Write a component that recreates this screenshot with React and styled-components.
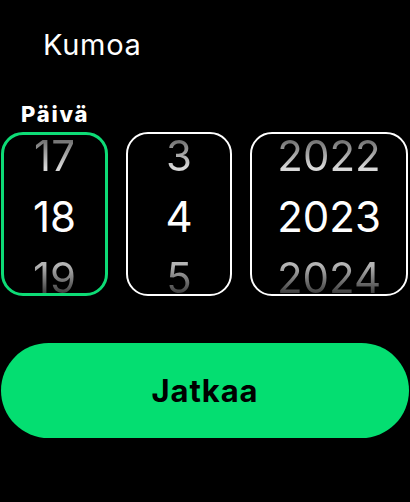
import React from "react";
import styled, { createGlobalStyle } from "styled-components";

const Global = createGlobalStyle`
  html, body { margin: 0; padding: 0; background: #000; }
  body { font-family: Inter, "Noto Sans", sans-serif; color: #fff; }
`;

const Screen = styled.div`
  width: 410px;
  height: 502px;
  background: #000;
  display: flex;
  flex-direction: column;
  overflow: hidden;
`;

const Cancel = styled.div`
  margin: 28px 0 0 43px;
  font-size: 29px;
  line-height: 34px;
  font-weight: 400;
  letter-spacing: 0.7px;
  color: #fff;
`;

const Label = styled.div`
  margin: 40px 0 0 21px;
  font-size: 22px;
  line-height: 24px;
  font-weight: 800;
  letter-spacing: 1.8px;
`;

const Pickers = styled.div`
  margin: 6px 2px 0 1px;
  display: grid;
  grid-template-columns: 107px 106px 1fr;
  column-gap: 18px;
`;

const Wheel = styled.div`
  box-sizing: border-box;
  height: 164px;
  border: ${(p) => (p.$active ? "3px solid #0ddc76" : "2px solid #fff")};
  border-radius: 22px;
  overflow: hidden;
  display: flex;
  flex-direction: column;
  align-items: center;
  justify-content: center;
  padding-top: 4px;
`;

const Item = styled.div`
  flex: 0 0 61px;
  line-height: 61px;
  font-size: 42px;
  font-weight: 400;
  color: #fff;
  ${(p) =>
    p.$pos === "top" &&
    `
    background: linear-gradient(to bottom, #666 20%, #d8d8d8 70%);
    -webkit-background-clip: text;
    background-clip: text;
    color: transparent;
  `}
  ${(p) =>
    p.$pos === "bottom" &&
    `
    background: linear-gradient(to bottom, #b5b5b5 30%, #333 80%);
    -webkit-background-clip: text;
    background-clip: text;
    color: transparent;
  `}
`;

const Button = styled.button`
  margin: 47px 1px 0 1px;
  height: 95px;
  border: none;
  border-radius: 48px;
  background: #04de71;
  color: #000;
  font-family: Inter, "Noto Sans", sans-serif;
  font-size: 31px;
  font-weight: 700;
  letter-spacing: 0.9px;
  padding: 0;
`;

const columns = [
  { values: ["17", "18", "19"], active: true },
  { values: ["3", "4", "5"] },
  { values: ["2022", "2023", "2024"] },
];

export default function App() {
  return (
    <Screen>
      <Global />
      <Cancel>Kumoa</Cancel>
      <Label>Päivä</Label>
      <Pickers>
        {columns.map((c, i) => (
          <Wheel key={i} $active={c.active}>
            <Item $pos="top">{c.values[0]}</Item>
            <Item>{c.values[1]}</Item>
            <Item $pos="bottom">{c.values[2]}</Item>
          </Wheel>
        ))}
      </Pickers>
      <Button>Jatkaa</Button>
    </Screen>
  );
}
